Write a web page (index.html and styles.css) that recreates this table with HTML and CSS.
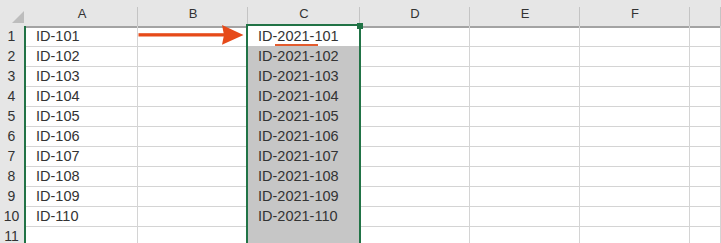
FILE: index.html
```html
<!DOCTYPE html>
<html lang="en">
<head>
<meta charset="utf-8">
<title>Sheet1</title>
<link rel="stylesheet" href="styles.css">
</head>
<body>
<div class="sheet">
  <div class="row head">
    <div class="corner"><span class="tri"></span></div>
    <div class="ch">A</div>
    <div class="ch">B</div>
    <div class="ch">C</div>
    <div class="ch">D</div>
    <div class="ch">E</div>
    <div class="ch">F</div>
    <div class="ch"></div>
  </div>

  <div class="row">
    <div class="rh">1</div>
    <div class="c">ID-101</div>
    <div class="c">
      <svg class="arrow" width="109" height="20" viewBox="0 0 109 20">
        <rect x="0.5" y="7.2" width="86" height="3.3" fill="#e64a19"/>
        <polygon points="84,-1 105.5,8.9 84,18.8 86,8.9" fill="#e64a19"/>
      </svg>
    </div>
    <div class="c act">ID-<span class="mark">2021-</span>101</div>
    <div class="c"></div><div class="c"></div><div class="c"></div><div class="c"></div>
  </div>

  <div class="row">
    <div class="rh">2</div><div class="c">ID-102</div><div class="c"></div>
    <div class="c sel">ID-2021-102</div>
    <div class="c"></div><div class="c"></div><div class="c"></div><div class="c"></div>
  </div>
  <div class="row">
    <div class="rh">3</div><div class="c">ID-103</div><div class="c"></div>
    <div class="c sel">ID-2021-103</div>
    <div class="c"></div><div class="c"></div><div class="c"></div><div class="c"></div>
  </div>
  <div class="row">
    <div class="rh">4</div><div class="c">ID-104</div><div class="c"></div>
    <div class="c sel">ID-2021-104</div>
    <div class="c"></div><div class="c"></div><div class="c"></div><div class="c"></div>
  </div>
  <div class="row">
    <div class="rh">5</div><div class="c">ID-105</div><div class="c"></div>
    <div class="c sel">ID-2021-105</div>
    <div class="c"></div><div class="c"></div><div class="c"></div><div class="c"></div>
  </div>
  <div class="row">
    <div class="rh">6</div><div class="c">ID-106</div><div class="c"></div>
    <div class="c sel">ID-2021-106</div>
    <div class="c"></div><div class="c"></div><div class="c"></div><div class="c"></div>
  </div>
  <div class="row">
    <div class="rh">7</div><div class="c">ID-107</div><div class="c"></div>
    <div class="c sel">ID-2021-107</div>
    <div class="c"></div><div class="c"></div><div class="c"></div><div class="c"></div>
  </div>
  <div class="row">
    <div class="rh">8</div><div class="c">ID-108</div><div class="c"></div>
    <div class="c sel">ID-2021-108</div>
    <div class="c"></div><div class="c"></div><div class="c"></div><div class="c"></div>
  </div>
  <div class="row">
    <div class="rh">9</div><div class="c">ID-109</div><div class="c"></div>
    <div class="c sel">ID-2021-109</div>
    <div class="c"></div><div class="c"></div><div class="c"></div><div class="c"></div>
  </div>
  <div class="row">
    <div class="rh">10</div><div class="c">ID-110</div><div class="c"></div>
    <div class="c sel">ID-2021-110</div>
    <div class="c"></div><div class="c"></div><div class="c"></div><div class="c"></div>
  </div>
  <div class="row">
    <div class="rh">11</div><div class="c"></div><div class="c"></div>
    <div class="c sel"></div>
    <div class="c"></div><div class="c"></div><div class="c"></div><div class="c"></div>
  </div>

  <!-- selection frame around C1:C11 and its fill handle -->
  <div class="selection"></div>
  <div class="handle"></div>
</div>
</body>
</html>
```

FILE: styles.css
```css
html, body {
  margin: 0;
  padding: 0;
  background: #ffffff;
  overflow: hidden;
}

.sheet {
  position: relative;
  width: 721px;
  height: 243px;
  overflow: hidden;
  font-family: "Liberation Sans", Arial, sans-serif;
  color: #333333;
}

.row {
  display: grid;
  grid-template-columns: 26px 112px 110px 112px 110px 110px 110px 1fr;
  height: 20px;
}

/* column header strip */
.row.head {
  height: 26px;
  background: #e6e6e6;
}

.corner {
  box-sizing: border-box;
  border-bottom: 2px solid #a3a3a3;
  display: flex;
  align-items: flex-end;
  justify-content: flex-end;
  padding: 0 2px 3px 0;
}

.tri {
  width: 0;
  height: 0;
  border-left: 12px solid transparent;
  border-bottom: 12px solid #bdbdbd;
}

.ch {
  box-sizing: border-box;
  border-bottom: 2px solid #a3a3a3;
  background-image: linear-gradient(#c4c4c4, #c4c4c4);
  background-size: 1px 19px;
  background-position: right bottom;
  background-repeat: no-repeat;
  text-align: center;
  font-size: 13px;
  line-height: 24px;
  padding-top: 2px;
  color: #333333;
}

/* row numbers */
.rh {
  box-sizing: border-box;
  background: #e6e6e6;
  border-right: 2px solid #217346;
  border-bottom: 1px solid #d0d0d0;
  text-align: center;
  font-size: 14px;
  line-height: 20px;
  padding-right: 1px;
  color: #333333;
}

/* cells */
.c {
  box-sizing: border-box;
  border-right: 1px solid #d4d4d4;
  border-bottom: 1px solid #d4d4d4;
  font-size: 14.5px;
  line-height: 20px;
  padding-left: 10px;
  white-space: nowrap;
}

.c.act {
  background: #ffffff;
}

.c.sel {
  background: #c6c6c6;
  border-bottom-color: #a9a9a9;
}

.c .arrow {
  display: block;
  margin-left: -10px;
  overflow: visible;
}

.mark {
  position: relative;
}

.mark::after {
  content: "";
  position: absolute;
  left: -2px;
  right: -4px;
  bottom: -2px;
  height: 2px;
  background: #e35b2d;
}

.selection {
  position: absolute;
  left: 246px;
  top: 24px;
  width: 115px;
  height: 240px;
  box-sizing: border-box;
  border: 2px solid #217346;
}

.handle {
  position: absolute;
  left: 357px;
  top: 23px;
  width: 6px;
  height: 6px;
  background: #217346;
}
```
